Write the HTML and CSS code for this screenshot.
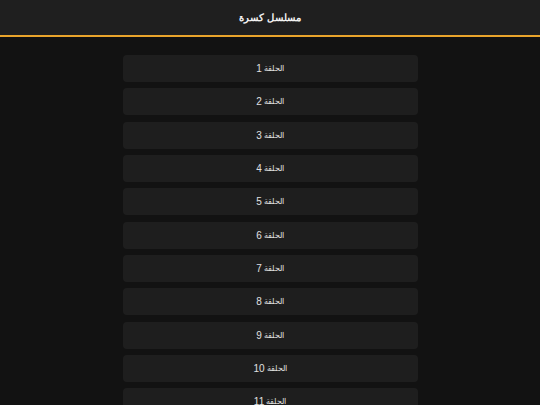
FILE: index.html
```html
<!DOCTYPE html>
<html lang="ar" dir="rtl">
<head>
<meta charset="utf-8">
<link rel="stylesheet" href="styles.css">
</head>
<body>
<header class="top">مسلسل كسرة</header>
<main class="list">
  <a class="ep">الحلقة <span class="num">1</span></a>
  <a class="ep">الحلقة <span class="num">2</span></a>
  <a class="ep">الحلقة <span class="num">3</span></a>
  <a class="ep">الحلقة <span class="num">4</span></a>
  <a class="ep">الحلقة <span class="num">5</span></a>
  <a class="ep">الحلقة <span class="num">6</span></a>
  <a class="ep">الحلقة <span class="num">7</span></a>
  <a class="ep">الحلقة <span class="num">8</span></a>
  <a class="ep">الحلقة <span class="num">9</span></a>
  <a class="ep">الحلقة <span class="num">10</span></a>
  <a class="ep">الحلقة <span class="num">11</span></a>
  <a class="ep">الحلقة <span class="num">12</span></a>
</main>
</body>
</html>
```
FILE: styles.css
```css
html, body {
  margin: 0;
  padding: 0;
  background: #121212;
  color: #e6e6e6;
  font-family: "Liberation Sans", Arial, sans-serif;
}
.top {
  height: 35px;
  display: flex;
  align-items: center;
  justify-content: center;
  background: #1f1f1f;
  border-bottom: 2px solid #e9a42c;
  font-size: 10px;
  font-weight: bold;
  color: #f2f2f2;
}
.list {
  width: 295px;
  margin: 0 auto;
  padding-top: 18px;
  display: flex;
  flex-direction: column;
  gap: 6.33px;
}
.ep {
  height: 27px;
  display: flex;
  align-items: center;
  justify-content: center;
  gap: 2px;
  background: #1e1e1e;
  border-radius: 4px;
  font-size: 8px;
  color: #e0e0e0;
}
.num {
  font-size: 10px;
}
```
